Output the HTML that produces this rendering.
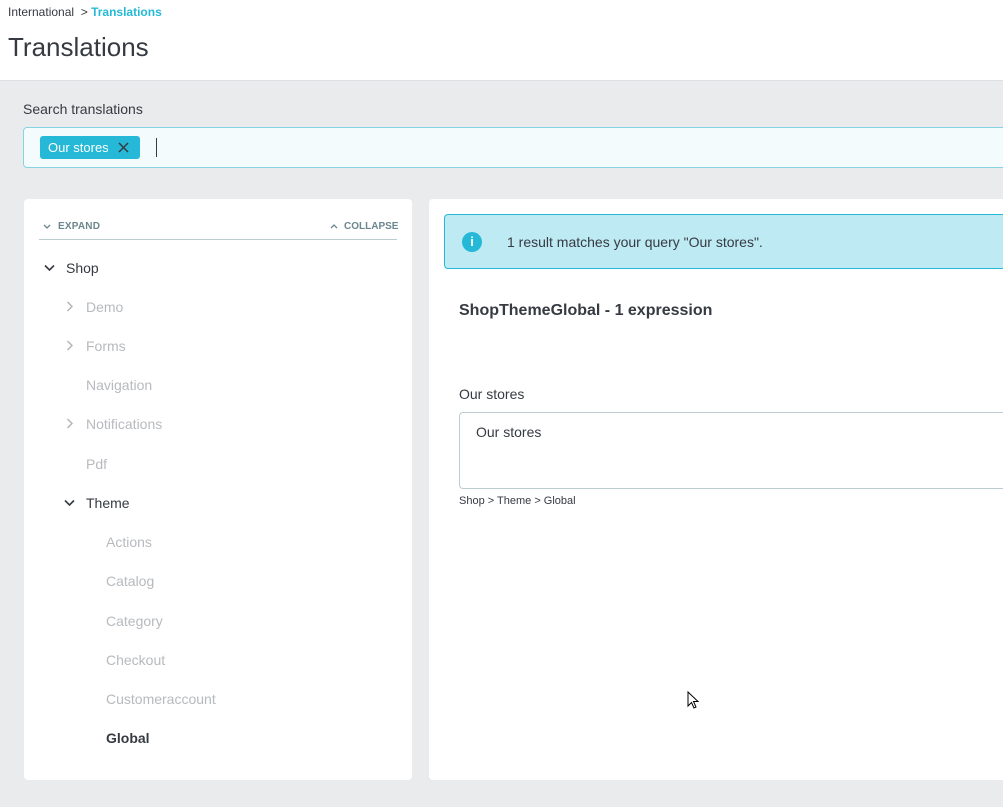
<!DOCTYPE html>
<html><head><meta charset="utf-8"><style>
*{box-sizing:border-box;margin:0;padding:0}
body{width:1003px;height:807px;overflow:hidden;background:#eaebed;font-family:"Liberation Sans",sans-serif;color:#363a41;position:relative}
.a{position:absolute;white-space:nowrap}
.hdr{position:absolute;left:0;top:0;width:1003px;height:81px;background:#fff;border-bottom:1px solid #dcdfe3}
.t{font-size:14px;line-height:16px}
.g{color:#b7babe}
svg{position:absolute}
</style></head><body>
<div class="hdr"></div>
<div class="a" style="left:8px;top:5px;font-size:12px">International &nbsp;&gt; <span style="color:#25b9d7;font-weight:bold">Translations</span></div>
<div class="a" style="left:8px;top:32px;font-size:26px;color:#363a41">Translations</div>
<div class="a t" style="left:23px;top:101px">Search translations</div>
<div class="a" style="left:23px;top:127px;width:990px;height:41px;background:#f4fbfd;border:1px solid #87d3e3;border-radius:4px"></div>
<div class="a" style="left:40px;top:136px;width:100px;height:23px;background:#25b9d7;border-radius:3px;color:#fff;font-size:13px;line-height:23px;padding-left:8px">Our stores</div>
<svg style="left:118px;top:142px" width="11" height="11"><path d="M1 1L10 10M10 1L1 10" stroke="#363a41" stroke-width="1.5"/></svg>
<div class="a" style="left:156px;top:138px;width:1px;height:19px;background:#363a41"></div>

<div class="a" style="left:24px;top:199px;width:388px;height:581px;background:#fff;border-radius:4px"></div>
<svg style="left:43px;top:224px" width="8" height="6"><path d="M1 1L4 4L7 1" stroke="#6c868e" stroke-width="1.3" fill="none"/></svg>
<div class="a" style="left:58px;top:221px;font-size:10px;font-weight:bold;color:#6c868e;letter-spacing:.2px">EXPAND</div>
<svg style="left:330px;top:223px" width="8" height="6"><path d="M1 5L4 2L7 5" stroke="#6c868e" stroke-width="1.3" fill="none"/></svg>
<div class="a" style="left:344px;top:221px;font-size:10px;font-weight:bold;color:#6c868e;letter-spacing:0">COLLAPSE</div>
<div class="a" style="left:39px;top:239px;width:358px;height:1px;background:#bbcdd2"></div>

<svg style="left:44px;top:264px" width="11" height="8"><path d="M1 1.5L5.5 6L10 1.5" stroke="#363a41" stroke-width="1.6" fill="none"/></svg>
<div class="a t" style="left:66px;top:260px">Shop</div>
<svg style="left:66px;top:301px" width="7" height="11"><path d="M1.5 1L6 5.5L1.5 10" stroke="#b3b6ba" stroke-width="1.5" fill="none"/></svg>
<div class="a t g" style="left:86px;top:299px">Demo</div>
<svg style="left:66px;top:340px" width="7" height="11"><path d="M1.5 1L6 5.5L1.5 10" stroke="#b3b6ba" stroke-width="1.5" fill="none"/></svg>
<div class="a t g" style="left:86px;top:338px">Forms</div>
<div class="a t g" style="left:86px;top:377px">Navigation</div>
<svg style="left:66px;top:418px" width="7" height="11"><path d="M1.5 1L6 5.5L1.5 10" stroke="#b3b6ba" stroke-width="1.5" fill="none"/></svg>
<div class="a t g" style="left:86px;top:416px">Notifications</div>
<div class="a t g" style="left:86px;top:456px">Pdf</div>
<svg style="left:64px;top:499px" width="11" height="8"><path d="M1 1.5L5.5 6L10 1.5" stroke="#363a41" stroke-width="1.6" fill="none"/></svg>
<div class="a t" style="left:86px;top:495px">Theme</div>
<div class="a t g" style="left:106px;top:534px">Actions</div>
<div class="a t g" style="left:106px;top:573px">Catalog</div>
<div class="a t g" style="left:106px;top:613px">Category</div>
<div class="a t g" style="left:106px;top:652px">Checkout</div>
<div class="a t g" style="left:106px;top:691px">Customeraccount</div>
<div class="a t" style="left:106px;top:730px;font-weight:bold">Global</div>

<div class="a" style="left:429px;top:199px;width:600px;height:581px;background:#fff;border-radius:4px"></div>
<div class="a" style="left:444px;top:214px;width:580px;height:55px;background:#beeaf3;border:1px solid #25b9d7;border-radius:4px"></div>
<div class="a" style="left:462px;top:232px;width:20px;height:20px;border-radius:50%;background:#25b9d7;color:#fff;font-size:13px;font-weight:bold;text-align:center;line-height:20px">i</div>
<div class="a t" style="left:507px;top:234px">1 result matches your query "Our stores".</div>
<div class="a" style="left:459px;top:302px;font-size:16px;font-weight:bold">ShopThemeGlobal - 1 expression</div>
<div class="a t" style="left:459px;top:386px">Our stores</div>
<div class="a" style="left:459px;top:412px;width:560px;height:77px;border:1px solid #bbcdd2;border-radius:4px"></div>
<div class="a t" style="left:476px;top:424px">Our stores</div>
<div class="a" style="left:459px;top:494px;font-size:11px;line-height:14px">Shop &gt; Theme &gt; Global</div>
<svg style="left:687px;top:691px" width="12" height="19"><path d="M1 1L1 15L4.5 11.5L7 17L9 16L6.5 10.5L11 10.5Z" fill="#fff" stroke="#000" stroke-width="1"/></svg>
</body></html>
